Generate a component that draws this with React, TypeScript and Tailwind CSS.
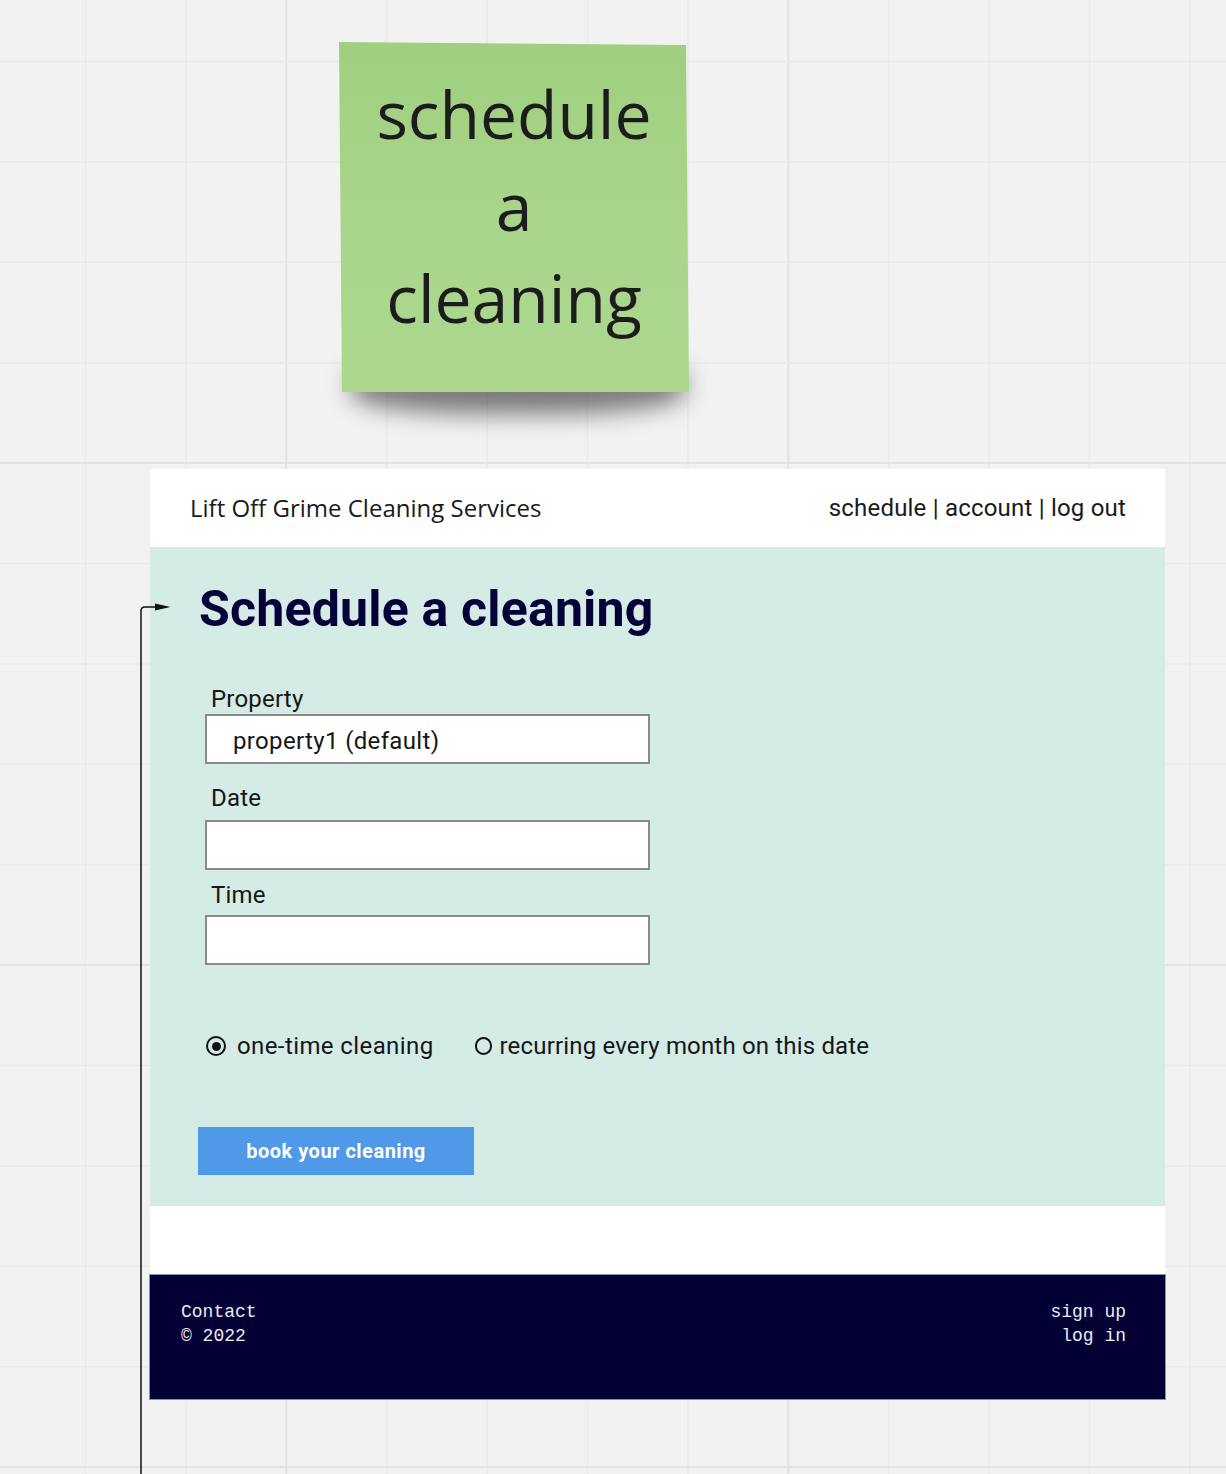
import React from "react";

function Grid() {
  const xs = Array.from({ length: 12 }, (_, k) => 85.5 + 100.4 * k);
  const ys = Array.from({ length: 15 }, (_, k) => 61.5 + 100.4 * k);
  return (
    <svg className="absolute inset-0" width="1226" height="1474">
      {xs.map((x, k) => {
        const major = k === 2 || k === 7;
        return (
          <line
            key={"x" + k}
            x1={x}
            x2={x}
            y1={0}
            y2={1474}
            stroke={major ? "#e3e3e3" : "#eaeaea"}
            strokeWidth={major ? 2 : 1.5}
          />
        );
      })}
      {ys.map((y, k) => {
        const major = k === 4 || k === 9 || k === 14;
        return (
          <line
            key={"y" + k}
            x1={0}
            x2={1226}
            y1={y}
            y2={y}
            stroke={major ? "#e3e3e3" : "#eaeaea"}
            strokeWidth={major ? 2 : 1.5}
          />
        );
      })}
    </svg>
  );
}

function Sticky() {
  return (
    <>
      <div className="absolute left-[352px] top-[370px] w-[332px] h-[44px] bg-black/50 blur-[12px] rounded-b-[45%]" />
      <div className="absolute left-[339px] top-[42px] w-[350px] h-[350px] [clip-path:polygon(0_0,347px_3px,100%_100%,3px_100%)] bg-linear-to-b from-[#a0cf7f] via-[#a9d58b] to-[#add78f]">
        <div className="flex flex-col items-center pt-[25px] font-['Open_Sans',sans-serif] text-[66px] leading-[92px] text-[#1c1c1c]">
          <span>schedule</span>
          <span>a</span>
          <span>cleaning</span>
        </div>
      </div>
    </>
  );
}

function Field({ label, value, mt, labelMt }: { label: string; value?: string; mt: string; labelMt: string }) {
  return (
    <>
      <div className={`${labelMt} ml-[13px] text-[24px] leading-[28px] text-[#161616] tracking-[0.2px]`}>{label}</div>
      <div
        className={`${mt} ml-[7px] w-[445px] h-[50px] border-2 border-[#8a8a8a] bg-white flex items-center pl-[26px] pt-[3px] text-[24px] leading-[28px] text-[#161616] tracking-[0.35px]`}
      >
        {value}
      </div>
    </>
  );
}

function Frame() {
  return (
    <div className="absolute left-[150px] top-[469px] w-[1015px] flex flex-col">
      <header className="h-[78px] bg-white flex items-center justify-between pl-[40px] pr-[39px]">
        <span className="font-['Open_Sans',sans-serif] text-[24px] leading-[32px] text-[#1a1a1a]">
          Lift Off Grime Cleaning Services
        </span>
        <span className="font-['Roboto',sans-serif] text-[24px] leading-[32px] text-[#1a1a1a] tracking-[0.2px]">
          schedule | account | log out
        </span>
      </header>
      <main className="h-[659px] bg-[#d4ebe6] pl-[48px] pt-[32px] flex flex-col items-start font-['Roboto',sans-serif]">
        <h1 className="ml-[1px] text-[50px] leading-[60px] font-bold text-[#050038] tracking-[0.2px]">Schedule a cleaning</h1>
        <Field label="Property" value="property1 (default)" labelMt="mt-[46px]" mt="mt-[1px]" />
        <Field label="Date" labelMt="mt-[20px]" mt="mt-[8px]" />
        <Field label="Time" labelMt="mt-[11px]" mt="mt-[6px]" />
        <div className="mt-[67px] ml-[8px] flex items-center h-[28px] text-[24px] leading-[28px] text-[#161616]">
          <span className="w-[20px] h-[20px] rounded-full border-[2.5px] border-[#111] flex items-center justify-center">
            <span className="w-[9px] h-[9px] rounded-full bg-[#111]" />
          </span>
          <span className="ml-[11px] tracking-[0.4px]">one-time cleaning</span>
          <span className="ml-[41px] w-[17px] h-[18px] rounded-full border-[2.5px] border-[#111]" />
          <span className="ml-[8px] tracking-[0.17px]">recurring every month on this date</span>
        </div>
        <button className="mt-[67px] w-[276px] h-[48px] bg-[#5099e9] text-white font-bold text-[20px] tracking-[0.5px] flex items-center justify-center">
          book your cleaning
        </button>
      </main>
      <div className="h-[68px] bg-white" />
      <footer className="-mx-px h-[126px] bg-[#030033] border border-[#8e8dab] flex justify-between pl-[31px] pr-[39px] pt-[25px] font-['Liberation_Mono',monospace] text-[18px] leading-[24px] text-[#ececf4]">
        <div className="flex flex-col">
          <span>Contact</span>
          <span>© 2022</span>
        </div>
        <div className="flex flex-col items-end">
          <span>sign up</span>
          <span>log in</span>
        </div>
      </footer>
    </div>
  );
}

function Connector() {
  return (
    <svg className="absolute inset-0 pointer-events-none" width="1226" height="1474">
      <path d="M141 1474 L141 611 Q141 607 145 607 L158 607" fill="none" stroke="#111" strokeWidth="1.5" />
      <polygon points="155,603.5 170.5,607 155,610.5" fill="#111" />
    </svg>
  );
}

export default function App() {
  return (
    <div className="relative w-[1226px] h-[1474px] overflow-hidden bg-[#f2f2f2]">
      <Grid />
      <Sticky />
      <Frame />
      <Connector />
    </div>
  );
}
